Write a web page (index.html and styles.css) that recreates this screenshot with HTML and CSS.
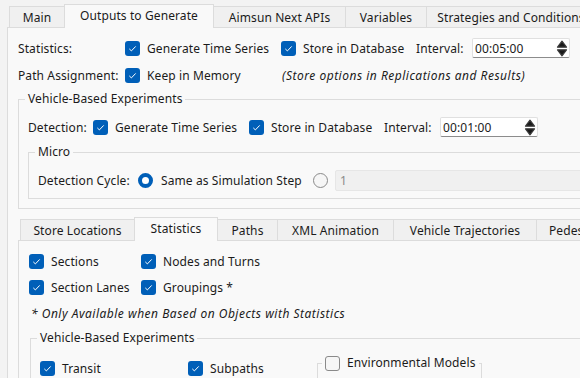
FILE: index.html
```html
<!DOCTYPE html>
<html>
<head>
<meta charset="utf-8">
<link rel="stylesheet" href="styles.css">
</head>
<body>
<div class="root">
  <div class="tabbar top-tabs">
    <div class="tab t-main">Main</div>
    <div class="tab sel t-outputs">Outputs to Generate</div>
    <div class="tab t-apis">Aimsun Next APIs</div>
    <div class="tab t-vars">Variables</div>
    <div class="tab t-strat">Strategies and Conditions</div>
  </div>
  <div class="pane outer-pane">
    <div class="row stats-row">
      <span class="lbl">Statistics:</span>
      <span class="opt"><span class="check on"><svg viewBox="0 0 15 15"><path d="M4.3 7.9 L6.4 9.9 L10.7 5.4"/></svg></span>Generate Time Series</span>
      <span class="opt"><span class="check on"><svg viewBox="0 0 15 15"><path d="M4.3 7.9 L6.4 9.9 L10.7 5.4"/></svg></span>Store in Database</span>
      <span class="lbl">Interval:</span>
      <span class="spin"><span class="spin-val">00:05:00</span><svg class="arrows" viewBox="0 0 12 17"><path d="M1.5 7.2 L6 1.2 L10.5 7.2 Z M1.5 9.8 L6 15.8 L10.5 9.8 Z"/></svg></span>
    </div>
    <div class="row path-row">
      <span class="lbl">Path Assignment:</span>
      <span class="opt"><span class="check on"><svg viewBox="0 0 15 15"><path d="M4.3 7.9 L6.4 9.9 L10.7 5.4"/></svg></span>Keep in Memory</span>
      <span class="note">(Store options in Replications and Results)</span>
    </div>
    <fieldset class="group veh-group">
      <legend>Vehicle-Based Experiments</legend>
      <div class="row det-row">
        <span class="lbl">Detection:</span>
        <span class="opt"><span class="check on"><svg viewBox="0 0 15 15"><path d="M4.3 7.9 L6.4 9.9 L10.7 5.4"/></svg></span>Generate Time Series</span>
        <span class="opt"><span class="check on"><svg viewBox="0 0 15 15"><path d="M4.3 7.9 L6.4 9.9 L10.7 5.4"/></svg></span>Store in Database</span>
        <span class="lbl">Interval:</span>
        <span class="spin"><span class="spin-val">00:01:00</span><svg class="arrows" viewBox="0 0 12 17"><path d="M1.5 7.2 L6 1.2 L10.5 7.2 Z M1.5 9.8 L6 15.8 L10.5 9.8 Z"/></svg></span>
      </div>
      <fieldset class="group micro-group">
        <legend>Micro</legend>
        <div class="row cycle-row">
          <span class="lbl">Detection Cycle:</span>
          <span class="opt"><span class="radio on"></span>Same as Simulation Step</span>
          <span class="opt"><span class="radio"></span></span>
          <span class="disabled-input">1</span>
        </div>
      </fieldset>
    </fieldset>

    <div class="tabbar sub-tabs">
      <div class="tab s-store">Store Locations</div>
      <div class="tab sel s-stats">Statistics</div>
      <div class="tab s-paths">Paths</div>
      <div class="tab s-xml">XML Animation</div>
      <div class="tab s-traj">Vehicle Trajectories</div>
      <div class="tab s-ped">Pedestrians</div>
    </div>
    <div class="pane inner-pane">
      <div class="row obj-row">
        <span class="opt"><span class="check on"><svg viewBox="0 0 15 15"><path d="M4.3 7.9 L6.4 9.9 L10.7 5.4"/></svg></span>Sections</span>
        <span class="opt"><span class="check on"><svg viewBox="0 0 15 15"><path d="M4.3 7.9 L6.4 9.9 L10.7 5.4"/></svg></span>Nodes and Turns</span>
      </div>
      <div class="row obj-row second">
        <span class="opt"><span class="check on"><svg viewBox="0 0 15 15"><path d="M4.3 7.9 L6.4 9.9 L10.7 5.4"/></svg></span>Section Lanes</span>
        <span class="opt"><span class="check on"><svg viewBox="0 0 15 15"><path d="M4.3 7.9 L6.4 9.9 L10.7 5.4"/></svg></span>Groupings *</span>
      </div>
      <div class="row note-row">
        <span class="note">* Only Available when Based on Objects with Statistics</span>
      </div>
      <fieldset class="group veh-group2">
        <legend>Vehicle-Based Experiments</legend>
        <div class="row transit-row">
          <span class="opt"><span class="check on"><svg viewBox="0 0 15 15"><path d="M4.3 7.9 L6.4 9.9 L10.7 5.4"/></svg></span>Transit</span>
          <span class="opt"><span class="check on"><svg viewBox="0 0 15 15"><path d="M4.3 7.9 L6.4 9.9 L10.7 5.4"/></svg></span>Subpaths</span>
          <fieldset class="group env-group">
            <legend><span class="check"></span>Environmental Models</legend>
          </fieldset>
        </div>
      </fieldset>
    </div>
  </div>
</div>
</body>
</html>
```
FILE: styles.css
```css
html, body {
  margin: 0;
  padding: 0;
  overflow: hidden;
}
body {
  background: #f3f3f3;
  font-family: "Noto Sans", "Open Sans", sans-serif;
  font-size: 12px;
  line-height: 16px;
  letter-spacing: 0.1px;
  color: #1b1b1b;
  width: 580px;
  height: 378px;
}
.root {
  width: 660px;
  padding-top: 4px;
}

/* tabs */
.tabbar {
  display: flex;
  align-items: flex-start;
  height: 23px;
}
.top-tabs { padding-left: 9px; }
.tab {
  box-sizing: border-box;
  margin-top: 2px;
  height: 21px;
  display: flex;
  align-items: center;
  justify-content: center;
  padding-top: 1px;
  background: #f0f0f0;
  border: 1px solid #dcdcdc;
  border-bottom: none;
  margin-left: -1px;
  white-space: nowrap;
  flex: none;
}
.tab:first-child { margin-left: 0; }
.tab.sel {
  margin-top: 0;
  height: 24px;
  background: #f9f9f9;
  position: relative;
  z-index: 1;
  padding-top: 0;
  padding-bottom: 1px;
}
.t-main { width: 56px; }
.t-outputs { width: 150px; }
.t-apis { width: 133px; }
.t-vars { width: 82px; }
.t-strat { width: 170px; }

.sub-tabs {
  margin-top: 8px;
  padding-left: 2px;
}
.s-store { width: 115px; }
.s-stats { width: 84px; }
.s-paths { width: 61px; }
.s-xml { width: 117px; }
.s-traj { width: 144px; }
.s-ped { width: 90px; justify-content: flex-start; padding-left: 12px; }

/* panes */
.pane {
  background: #f9f9f9;
  border: 1px solid #dcdcdc;
  border-right: none;
  border-bottom: none;
}
.outer-pane {
  margin-left: 7px;
  padding: 10px 0 0 10px;
  height: 400px;
}
.inner-pane {
  padding: 10px 0 0 10px;
  height: 200px;
}

/* rows */
.row {
  display: grid;
  align-items: center;
  height: 20px;
  white-space: nowrap;
}
.stats-row { grid-template-columns: 107px 156px 135px 56px 98px; }
.path-row { grid-template-columns: 107px 157px auto; margin-top: 7px; }
.det-row { grid-template-columns: 65px 156px 135px 56px 98px; }
.cycle-row { grid-template-columns: 100px 175px 22px 1fr; height: 21px; }
.obj-row { grid-template-columns: 112px auto; }
.obj-row.second { margin-top: 6px; }
.note-row { margin-top: 6px; padding-left: 2px; }
.transit-row { grid-template-columns: 148px 129px 165px; align-items: start; }
.transit-row > .opt { height: 20px; }

.lbl, .opt, .note {
  padding-top: 1px;
}
.opt {
  display: flex;
  align-items: center;
}
.opt .check, .opt .radio {
  margin-top: -1px;
}
.note {
  font-style: italic;
  letter-spacing: 0.5px;
}

/* group boxes */
.group {
  margin: 0;
  border: 1px solid #dcdcdc;
  padding: 10px 0 9px 9px;
  min-width: 0;
}
.group legend {
  padding: 0 3px;
  margin-left: -3px;
  line-height: 16px;
}
.veh-group { margin-top: 6px; }
.micro-group {
  margin-top: 7px;
  padding: 10px 0 7px 9px;
}
.veh-group2 {
  margin-top: 7px;
  margin-left: 1px;
  padding-top: 12px;
}
.env-group {
  margin-top: -3px;
  padding: 0 0 0 7px;
  height: 40px;
  box-sizing: border-box;
}
.env-group legend {
  display: flex;
  align-items: center;
}

/* check boxes */
.check {
  box-sizing: border-box;
  width: 15px;
  height: 15px;
  border-radius: 3px;
  border: 1px solid #8a8a8a;
  background: #f6f6f6;
  margin-right: 7px;
  flex: none;
  display: block;
}
.check.on {
  border: none;
  background: #005fb8;
}
.check svg {
  display: block;
  width: 15px;
  height: 15px;
  fill: none;
  stroke: #ffffff;
  stroke-width: 1;
}

/* radio */
.radio {
  box-sizing: border-box;
  width: 15px;
  height: 15px;
  border-radius: 50%;
  border: 1px solid #8a8a8a;
  background: #f6f6f6;
  margin-right: 8px;
  flex: none;
}
.radio.on {
  border: 4.5px solid #005fb8;
  background: #ffffff;
}

/* spin box */
.spin {
  box-sizing: border-box;
  height: 20px;
  display: flex;
  align-items: center;
  justify-content: space-between;
  background: #ffffff;
  border: 1px solid #e0e0e0;
  border-bottom-color: #8c8c8c;
  border-radius: 2px;
  padding: 1px 1px 0 2px;
}
.arrows {
  width: 12px;
  height: 17px;
  margin-top: -1px;
  fill: #1a1a1a;
  stroke: #3a3a3a;
  stroke-width: 1.2;
  stroke-linejoin: round;
}

.disabled-input {
  box-sizing: border-box;
  height: 21px;
  display: flex;
  align-items: center;
  background: #f0f0f0;
  border: 1px solid #e6e6e6;
  border-radius: 2px;
  padding: 1px 0 0 4px;
  color: #8a8a8a;
}
```
